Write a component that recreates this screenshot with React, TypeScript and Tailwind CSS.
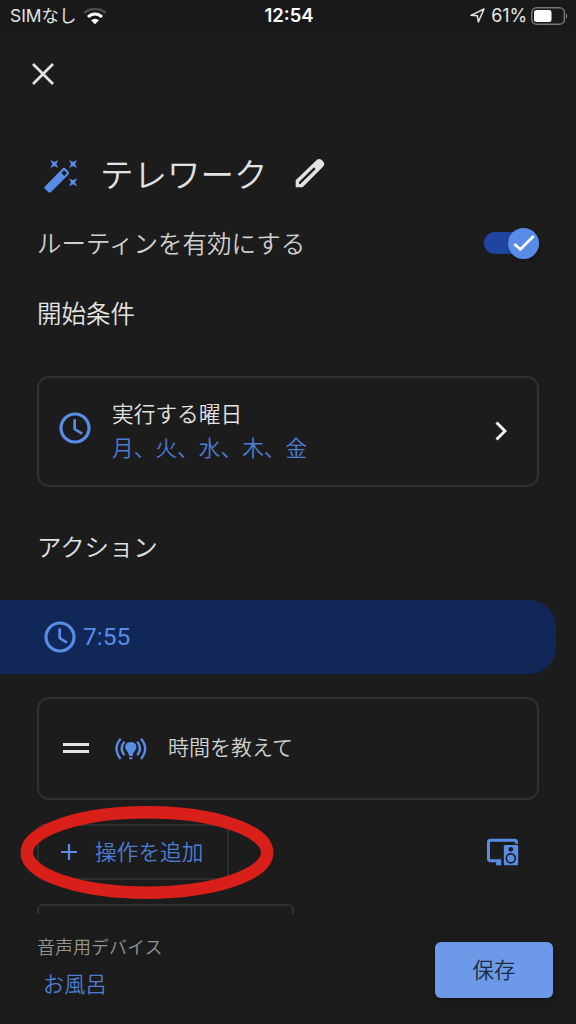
import React from 'react';

const Clock: React.FC<{ className?: string }> = ({ className }) => (
  <svg viewBox="0 0 96 96" fill="none" stroke="#598ce6" className={`w-8 h-8 shrink-0 ${className ?? ''}`}>
    <circle cx="48" cy="48" r="42" strokeWidth="9.5" />
    <path d="M47 22V51L69 65" strokeWidth="8" />
  </svg>
);

const WifiIcon = () => (
  <svg viewBox="0 0 72 54" fill="none" className="w-6 h-[18px] ml-[7px]">
    <path d="M4 18C20 2 52 2 68 18" stroke="#4a4a4a" strokeWidth="8" />
    <path d="M15 30C27 18 45 18 57 30" stroke="#fff" strokeWidth="9" />
    <path d="M24 40Q36 30 48 40L36 52Z" fill="#fff" />
  </svg>
);

const BatteryIcon = () => (
  <svg viewBox="0 0 37 18" className="w-[37px] h-[18px] ml-1">
    <rect x=".8" y=".8" width="32.6" height="16.4" rx="4.8" fill="none" stroke="#77777a" strokeWidth="1.5" />
    <rect x="3" y="3" width="17.5" height="12" rx="2.5" fill="#fff" />
    <path d="M35 6q2.5 3 0 6z" fill="#77777a" />
  </svg>
);

const StatusBar = () => (
  <div className="h-[31px] shrink-0 grid grid-cols-3 items-center pl-2.5 pr-2 bg-[#191919] text-[#e4e4e4] text-[18px] leading-none">
    <div className="flex items-center">
      <span className="text-[17.4px] font-normal">SIMなし</span>
      <WifiIcon />
    </div>
    <span className="text-center font-semibold text-[18.5px] text-white">12:54</span>
    <div className="flex items-center justify-end">
      <svg viewBox="0 0 45 45" className="w-[15px] h-[15px] mr-1.5">
        <path d="M3 22L42 3L25 42L22 23Z" fill="none" stroke="#e4e4e4" strokeWidth="4.5" strokeLinejoin="round" />
      </svg>
      <span className="font-normal tracking-[-0.1px]">61%</span>
      <BatteryIcon />
    </div>
  </div>
);

const WandIcon = () => (
  <svg viewBox="42 60 102 102" fill="#598ce6" className="w-[34px] h-[34px] shrink-0">
    <path
      fillRule="evenodd"
      d="M44 143L97 89Q102 84 107 89L115 97Q119 102 115 107L63 159Q59 163 55 159L44 149Q41 146 44 143ZM102 94L94 102L103 111L111 102Z"
    />
    {[[73, 75], [129, 75], [129, 130]].map(([x, y]) => (
      <path key={`${x}-${y}`} transform={`translate(${x} ${y})`} d="M-12-12L0-6L12-12L6 0L12 12L0 6L-12 12L-6 0Z" />
    ))}
  </svg>
);

const PencilIcon = () => (
  <svg viewBox="796 50 90 90" fill="#e2e2e2" className="w-[30px] h-[30px] shrink-0 -mt-[7px]">
    <path
      fillRule="evenodd"
      d="M798 138V117L861 56Q869 50 876 56L881 61Q887 69 880 76L819 138ZM808 128H812L858 83L853 78L808 122Z"
    />
  </svg>
);

const BroadcastIcon = () => (
  <svg viewBox="254 140 96 72" className="w-8 h-6 shrink-0 ml-[26px]">
    <g fill="none" stroke="#598ce6" strokeWidth="7">
      <path d="M271 145Q246 174 271 206M332 145Q357 174 332 206" />
      <path d="M282 154Q266 175 282 195M321 154Q337 175 321 195" />
    </g>
    <path d="M301.500 155C288 155 283 165 285 174C288 183 295 185 296 197H307C308 185 315 183 318 174C320 165 315 155 301.500 155ZM297 201H306V207H297Z" fill="#598ce6" />
  </svg>
);

const DevicesIcon = () => (
  <svg viewBox="78 176 98 84" className="w-[33px] h-7">
    <path d="M169 193V189Q169 183 163 183H91Q85 183 85 189V239Q85 244 91 244H123" fill="none" stroke="#598ce6" strokeWidth="9" />
    <path d="M108 244H123V258H108Z" fill="#598ce6" />
    <rect x="131" y="197" width="43" height="61" rx="4" fill="#598ce6" />
    <circle cx="152" cy="210" r="7" fill="#1c1c1c" />
    <circle cx="152" cy="237" r="13.500" fill="none" stroke="#1c1c1c" strokeWidth="5" />
  </svg>
);

const Toggle = () => (
  <div className="flex items-center w-[55px] h-[22px] rounded-full bg-[#2045a0]">
    <div className="ml-auto shrink-0 flex items-center justify-center w-[31px] h-[31px] rounded-full bg-[#598ce6] shadow-md">
      <svg viewBox="0 0 66 54" className="w-[22px] h-[18px]">
        <path d="M4 30L22 46L62 6" fill="none" stroke="#fff" strokeWidth="8" />
      </svg>
    </div>
  </div>
);

const App: React.FC = () => {
  return (
    <div className="w-[576px] h-[1024px] flex flex-col overflow-hidden bg-[#1c1c1c] text-[#e2e2e2] font-[350] font-['Inter','Noto_Sans_CJK_JP',sans-serif]">
      <StatusBar />

      <main className="h-[883px] shrink-0 overflow-hidden">
        <div className="h-[85px] pl-8 flex items-center">
          <svg viewBox="0 0 22 22" className="w-[22px] h-[22px]">
            <path d="M1 1L21 21M21 1L1 21" stroke="#e2e2e2" strokeWidth="2.8" />
          </svg>
        </div>

        <div className="h-[60px] mt-[30px] pl-11 flex items-center">
          <WandIcon />
          <h1 className="w-[172px] ml-[22px] mr-[23px] text-[33.5px] leading-none whitespace-nowrap">テレワーク</h1>
          <PencilIcon />
        </div>

        <div className="h-[50px] mt-[12px] pl-[37px] pr-[37px] flex items-center justify-between text-[24.5px] leading-none text-[#cfcfcf]">
          <span className="mt-[3px]">ルーティンを有効にする</span>
          <Toggle />
        </div>

        <h2 className="h-[30px] mt-[31px] pl-[37px] text-[24.5px] leading-[30px]">開始条件</h2>

        <div className="h-[111px] mt-[47px] mx-[37px] pl-5 pr-[30px] flex items-center border-2 border-[#303133] rounded-xl">
          <Clock className="-mt-2" />
          <div className="ml-[21px] -mt-0.5 text-[21.7px] leading-[34px]">
            <p>実行する曜日</p>
            <p className="text-[#4c7dd2]">月、火、水、木、金</p>
          </div>
          <svg viewBox="0 0 12 20" className="w-3 h-5 ml-auto -mt-px">
            <path d="M1.500 1.500L10 10L1.500 18.500" fill="none" stroke="#f0f0f0" strokeWidth="3" />
          </svg>
        </div>

        <h2 className="h-[30px] mt-11 pl-[37px] text-[24.4px] leading-[32px]">アクション</h2>

        <div className="w-[556px] h-[74px] mt-[39px] pl-11 flex items-center rounded-r-[27px] bg-[#112758] text-[#598ce6]">
          <Clock />
          <span className="ml-[7px] text-[24.5px] leading-none font-normal font-[Roboto]">7:55</span>
        </div>

        <div className="h-[103px] mt-[23px] mx-[37px] pl-6 flex items-center border-2 border-[#2e3034] rounded-xl">
          <div className="w-[26px] h-[10px] -mt-px border-y-3 border-[#e2e4e2]" />
          <BroadcastIcon />
          <span className="ml-[21px] -mt-0.5 text-[21px] leading-none text-[#cfcfcf]">時間を教えて</span>
        </div>

        <div className="relative h-[56px] mt-6 pl-[37px] pr-[57px] flex items-center justify-between">
          <button className="w-[192px] h-[56px] pl-[21px] flex items-center border-2 border-[#2d2e30] rounded-md text-[#4c7dd2] text-[21.7px] leading-none">
            <svg viewBox="0 0 18 18" className="w-[18px] h-[18px] mr-[17px]">
              <path d="M9 1V17M1 9H17" stroke="#598ce6" strokeWidth="2.2" />
            </svg>
            <span className="mt-px">操作を追加</span>
          </button>
          <DevicesIcon />
          {/* hand-marked highlight around the add button */}
          <svg viewBox="0 0 254 94" className="absolute left-5 top-[-19px] w-[254px] h-[94px]">
            <ellipse cx="127" cy="47.5" rx="120.200" ry="40.200" fill="none" stroke="#d91f1a" strokeWidth="12.500" />
          </svg>
        </div>

        <div className="w-[257px] h-[56px] mt-6 ml-[37px] border-2 border-[#303133] rounded-md" />
      </main>

      <footer className="h-[110px] shrink-0 pl-[37px] pr-[23px] flex items-center justify-between bg-[#1b1b1b]">
        <div className="-mt-[6px]">
          <p className="text-[18px] leading-[36px] text-[#949494]">音声用デバイス</p>
          <p className="pl-1.5 text-[21.2px] leading-[36px] text-[#4c7dd2]">お風呂</p>
        </div>
        <button className="w-[118px] h-14 mt-0.5 pt-0.5 rounded-md bg-[#6c9ae8] text-[#202b3e] text-[21.5px] leading-none shadow-md">保存</button>
      </footer>
    </div>
  );
};

export default App;
